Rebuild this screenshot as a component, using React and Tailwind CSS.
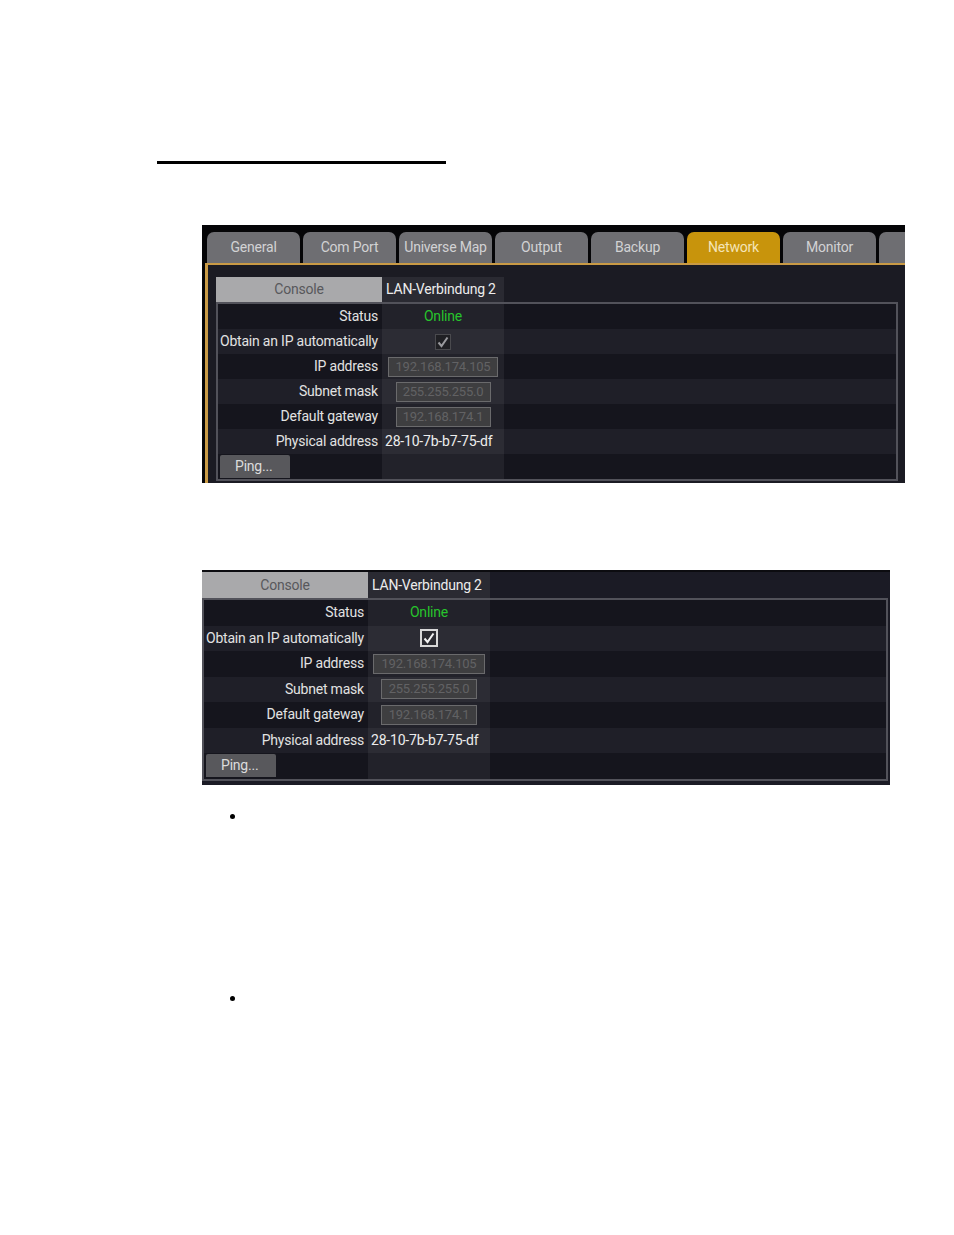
import React from 'react';

const font = { fontFamily: 'Roboto, "Liberation Sans", sans-serif' };

const tabs = ['General', 'Com Port', 'Universe Map', 'Output', 'Backup', 'Network', 'Monitor', 'User'];

const Check = ({ bright }) => (
  <div
    className={
      bright
        ? 'w-[18px] h-[18px] border-2 border-[#d8d8d8] bg-[#2a2a30] flex items-center justify-center'
        : 'w-[16px] h-[16px] border border-[#4a4a4e] bg-[#202024] flex items-center justify-center'
    }
  >
    <svg width="12" height="12" viewBox="0 0 12 12">
      <path
        d="M1.5 6.5 L4.5 10 L10.5 1.5"
        fill="none"
        stroke={bright ? '#f2f2f2' : '#9a9a9e'}
        strokeWidth="2"
      />
    </svg>
  </div>
);

const Field = ({ value, w }) => (
  <div
    className={`h-[20px] ${w} bg-[#3e3e40] border border-[#6a6a6c] text-[#626264] text-[13px] leading-[18px] text-center`}
  >
    {value}
  </div>
);

const Row = ({ label, children, light, h, center = true }) => (
  <div className={`flex ${h} ${light ? 'bg-[#1f1f28]' : 'bg-[#15151d]'}`}>
    <div className="w-[164px] shrink-0 pr-[4px] text-right text-[#e2e2e2] flex items-center justify-end">{label}</div>
    <div
      className={`w-[122px] shrink-0 bg-white/[0.06] flex items-center ${center ? 'justify-center' : 'pl-[3px]'}`}
    >
      {children}
    </div>
    <div className="flex-1" />
  </div>
);

const NetTable = ({ bright, ipW, maskW, h, headH }) => (
  <div className="text-[14px] tracking-[-0.2px]" style={font}>
    <div className={`flex ${headH}`}>
      <div className="w-[166px] bg-[#a9a9ab] text-[#58585c] flex items-center justify-center">Console</div>
      <div className="w-[122px] bg-[#2a2a32] text-[#ececec] flex items-center pl-[4px]">LAN-Verbindung 2</div>
    </div>
    <div className="border-2 border-[#52525a]">
      <Row h={h} label="Status">
        <span className="text-[#27c42c]">Online</span>
      </Row>
      <Row h={h} label="Obtain an IP automatically" light>
        <Check bright={bright} />
      </Row>
      <Row h={h} label="IP address">
        <Field value="192.168.174.105" w={ipW} />
      </Row>
      <Row h={h} label="Subnet mask" light>
        <Field value="255.255.255.0" w={maskW} />
      </Row>
      <Row h={h} label="Default gateway">
        <Field value="192.168.174.1" w={maskW} />
      </Row>
      <Row h={h} label="Physical address" light center={false}>
        <span className="text-[#ececec]">28-10-7b-b7-75-df</span>
      </Row>
      <div className={`flex ${h} bg-[#15151d]`}>
        <div className="w-[164px] shrink-0 pl-[2px] pt-[1px]">
          <div className="w-[70px] h-[23px] bg-[#58585c] rounded-t-[2px] text-[#dcdcdc] leading-[23px] pl-[15px]">
            Ping...
          </div>
        </div>
        <div className="w-[122px] shrink-0 bg-white/[0.06]" />
        <div className="flex-1" />
      </div>
    </div>
  </div>
);

export default function App() {
  return (
    <div className="bg-white min-h-[1235px] pt-[161px]">
      <div className="ml-[157px] w-[289px] h-[3px] bg-black" />

      <div className="ml-[202px] mt-[61px] w-[703px] h-[258px] bg-[#050507] overflow-hidden">
        <div className="flex gap-[3px] pt-[7px] pl-[5px] h-[38px]" style={font}>
          {tabs.map((t) => (
            <div
              key={t}
              className={`w-[93px] shrink-0 h-[31px] rounded-t-[7px] text-center leading-[31px] text-[14px] tracking-[-0.2px] ${
                t === 'Network' ? 'bg-[#c8940c] text-[#f4e4b8]' : 'bg-[#6e6e72] text-[#d2d2d4]'
              }`}
            >
              {t}
            </div>
          ))}
        </div>
        <div className="ml-[3px] h-[220px] border-t-2 border-l-[3px] border-[#c99a45] bg-[#1b1b23] pl-[8px] pt-[12px] pr-[7px]">
          <NetTable ipW="w-[110px]" maskW="w-[95px]" h="h-[25px]" headH="h-[25px]" />
        </div>
      </div>

      <div className="ml-[202px] mt-[87px] w-[688px] h-[215px] bg-[#1b1b25] border-t-2 border-[#0c0c10] pr-[2px]">
        <NetTable bright ipW="w-[112px]" maskW="w-[96px]" h="h-[25.5px]" headH="h-[26px]" />
      </div>

      <div className="ml-[230px] mt-[29px] w-[5px] h-[5px] rounded-full bg-black" />
      <div className="ml-[230px] mt-[177px] w-[5px] h-[5px] rounded-full bg-black" />
    </div>
  );
}
